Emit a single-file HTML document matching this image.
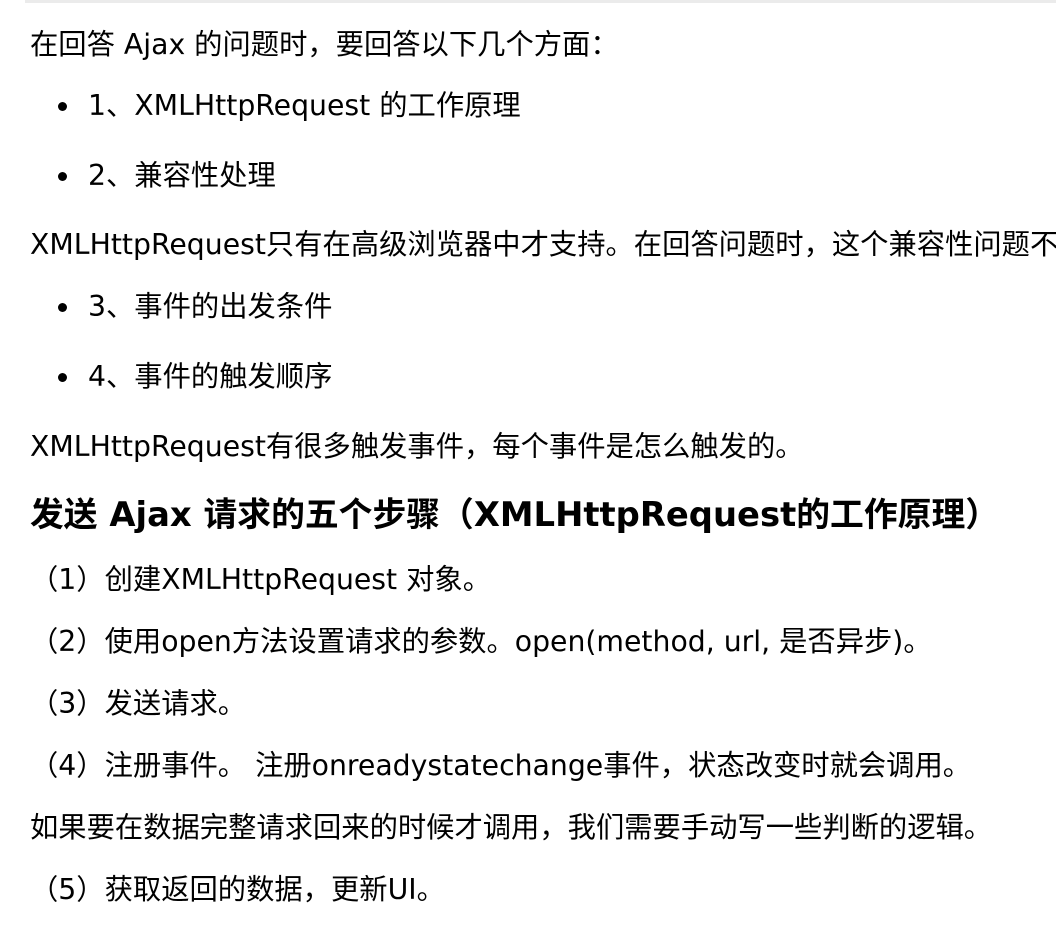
<!DOCTYPE html>
<html><head><meta charset="utf-8"><style>
html,body{margin:0;padding:0;background:#fff;width:1056px;height:930px;overflow:hidden;position:relative}
.bar{position:absolute;left:25px;top:0;width:1031px;height:3px;background:#ebebeb}
.l{position:absolute;left:30px;white-space:nowrap;font-family:"DejaVu Sans","Noto Sans CJK SC",sans-serif;font-size:28.3px;line-height:40px;color:#000}
.b{left:88px}
.dot{position:absolute;left:58px;width:9px;height:9px;border-radius:50%;background:#000}
.h{font-size:33.8px;font-weight:bold;line-height:44px}
</style></head><body>
<div class="bar"></div>
<div class="l" style="top:25px">在回答 Ajax 的问题时，要回答以下几个方面：</div>
<div class="dot" style="top:102px"></div><div class="l b" style="top:86px">1、XMLHttpRequest 的工作原理</div>
<div class="dot" style="top:172px"></div><div class="l b" style="top:156px">2、兼容性处理</div>
<div class="l" style="top:225px;width:1026px;overflow:hidden">XMLHttpRequest只有在高级浏览器中才支持。在回答问题时，这个兼容性问题不要</div>
<div class="dot" style="top:303px"></div><div class="l b" style="top:287px">3、事件的出发条件</div>
<div class="dot" style="top:373px"></div><div class="l b" style="top:357px">4、事件的触发顺序</div>
<div class="l" style="top:427px">XMLHttpRequest有很多触发事件，每个事件是怎么触发的。</div>
<div class="l h" style="top:493px">发送 Ajax 请求的五个步骤（XMLHttpRequest的工作原理）</div>
<div class="l" style="top:560px">（1）创建XMLHttpRequest 对象。</div>
<div class="l" style="top:622px">（2）使用open方法设置请求的参数。open(method, url, 是否异步)。</div>
<div class="l" style="top:684px">（3）发送请求。</div>
<div class="l" style="top:746px">（4）注册事件。 注册onreadystatechange事件，状态改变时就会调用。</div>
<div class="l" style="top:808px">如果要在数据完整请求回来的时候才调用，我们需要手动写一些判断的逻辑。</div>
<div class="l" style="top:870px">（5）获取返回的数据，更新UI。</div>
</body></html>
